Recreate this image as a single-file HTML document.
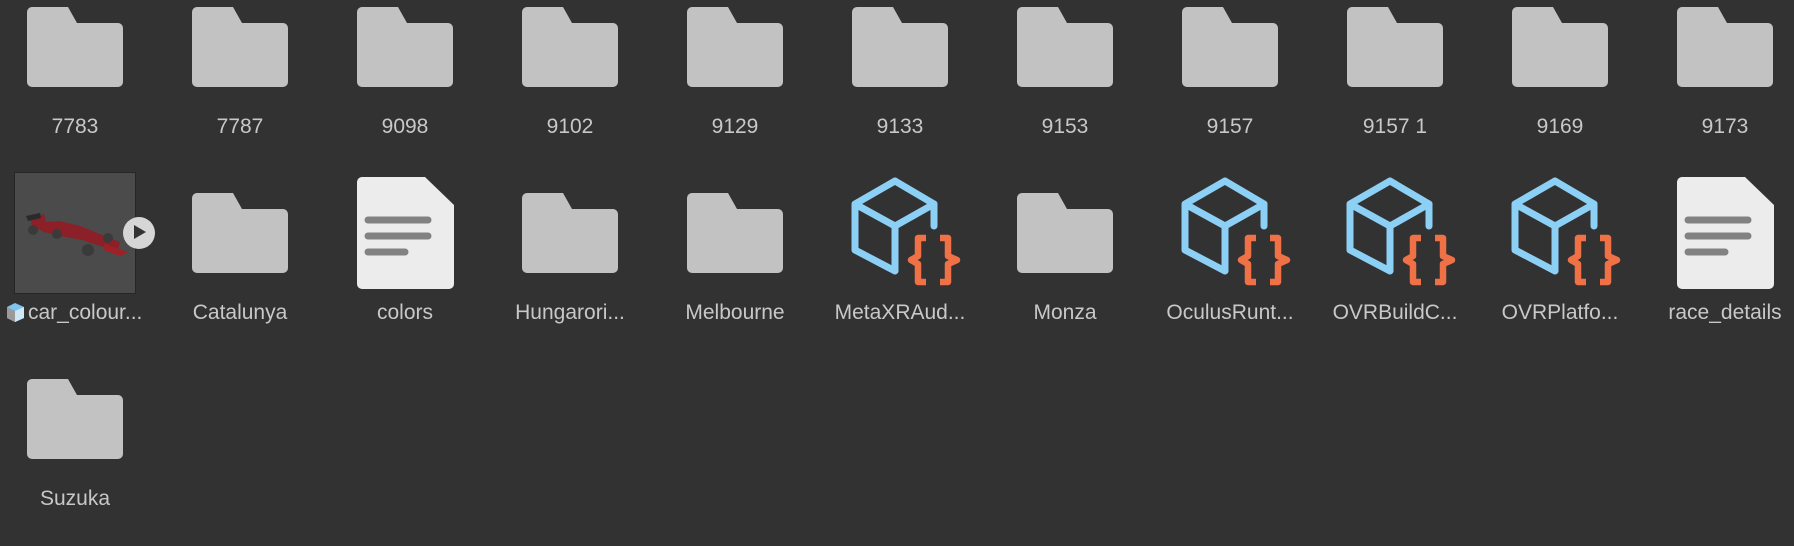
<!DOCTYPE html>
<html><head><meta charset="utf-8"><style>
html,body{margin:0;padding:0;background:#323232;width:1794px;height:546px;overflow:hidden;font-family:"Liberation Sans","DejaVu Sans",sans-serif}
svg{position:absolute;left:0;top:0}
.l{position:absolute;width:150px;text-align:center;color:#c8c8c8;font-size:21px;line-height:24px;white-space:nowrap}
</style></head><body>
<svg width="1794" height="546" viewBox="0 0 1794 546">
<defs>
<path id="fo" d="M27,12 a5,5 0 0 1 5-5 h36 l9,16 h41 a5,5 0 0 1 5,5 v54 a5,5 0 0 1 -5,5 h-86 a5,5 0 0 1 -5-5 z" fill="#c2c2c2"/>
<g id="doc">
<path d="M27,182 a5,5 0 0 1 5-5 h63 l29,28 v79 a5,5 0 0 1 -5,5 h-87 a5,5 0 0 1 -5-5 z" fill="#ececec"/>
<g stroke="#828282" stroke-width="7" stroke-linecap="round">
<line x1="38" y1="220" x2="98" y2="220"/><line x1="38" y1="236" x2="98" y2="236"/><line x1="38" y1="252" x2="75" y2="252"/>
</g></g>
<g id="cube">
<g fill="none" stroke="#8dd0f6" stroke-width="7" stroke-linejoin="round" stroke-linecap="round">
<path d="M70,181 L109,204 V226"/>
<path d="M70,181 L30,204 V250 L70,271 V226 L30,204"/>
<path d="M70,226 L109,204"/>
</g>
<g fill="none" stroke="#ef7145" stroke-width="6.5" stroke-linejoin="round">
<path d="M101,238 H93 V256 L86,260 L93,264 V282 H101"/>
<path d="M115,238 H123 V256 L132,260 L123,264 V282 H115"/>
</g></g>
</defs>
<use href="#fo" x="0"/><use href="#fo" x="165"/><use href="#fo" x="330"/><use href="#fo" x="495"/><use href="#fo" x="660"/><use href="#fo" x="825"/><use href="#fo" x="990"/><use href="#fo" x="1155"/><use href="#fo" x="1320"/><use href="#fo" x="1485"/><use href="#fo" x="1650"/>
<rect x="14" y="172" width="122" height="122" fill="#262626"/>
<rect x="15" y="173" width="120" height="120" fill="#4b4b4b"/>
<g>
<path d="M30,218 L44,214 L46,222 L60,221 L80,226 L105,236 L120,242 L118,250 L100,246 L82,240 L60,236 L44,232 L32,226 Z" fill="#8c2028"/>
<path d="M26,216 L40,213 L41,218 L28,221 Z" fill="#2a2a2a"/>
<circle cx="33" cy="230" r="5" fill="#3a3a3a"/><circle cx="57" cy="234" r="5" fill="#3a3a3a"/>
<circle cx="88" cy="250" r="6" fill="#3a3a3a"/><circle cx="108" cy="238" r="5" fill="#3a3a3a"/>
<path d="M104,244 L128,252 L120,256 L104,250 Z" fill="#a02028"/>
</g>
<circle cx="139" cy="233" r="16" fill="#d6d6d6"/>
<path d="M134,225 L146,232 L134,239 Z" fill="#333"/>
<use href="#fo" x="165" y="186"/>
<use href="#doc" x="330"/>
<use href="#fo" x="495" y="186"/>
<use href="#fo" x="660" y="186"/>
<use href="#cube" x="825"/>
<use href="#fo" x="990" y="186"/>
<use href="#cube" x="1155"/>
<use href="#cube" x="1320"/>
<use href="#cube" x="1485"/>
<use href="#doc" x="1650"/>
<use href="#fo" x="0" y="372"/>
<path d="M7,307 L15,303 L24,307 L24,318 L15,322 L7,318 Z" fill="#7fc4ec"/>
<path d="M15,311 L24,307 L24,318 L15,322 Z" fill="#cfe8f8"/>
<path d="M7,307 L15,311 L15,322 L7,318 Z" fill="#9a9a9a"/>
</svg>
<div class="l" style="left:0;top:115px">7783</div>
<div class="l" style="left:165px;top:115px">7787</div>
<div class="l" style="left:330px;top:115px">9098</div>
<div class="l" style="left:495px;top:115px">9102</div>
<div class="l" style="left:660px;top:115px">9129</div>
<div class="l" style="left:825px;top:115px">9133</div>
<div class="l" style="left:990px;top:115px">9153</div>
<div class="l" style="left:1155px;top:115px">9157</div>
<div class="l" style="left:1320px;top:115px">9157 1</div>
<div class="l" style="left:1485px;top:115px">9169</div>
<div class="l" style="left:1650px;top:115px">9173</div>
<div class="l" style="left:28px;top:301px;width:auto;text-align:left">car_colour...</div>
<div class="l" style="left:165px;top:301px">Catalunya</div>
<div class="l" style="left:330px;top:301px">colors</div>
<div class="l" style="left:495px;top:301px">Hungarori...</div>
<div class="l" style="left:660px;top:301px">Melbourne</div>
<div class="l" style="left:825px;top:301px">MetaXRAud...</div>
<div class="l" style="left:990px;top:301px">Monza</div>
<div class="l" style="left:1155px;top:301px">OculusRunt...</div>
<div class="l" style="left:1320px;top:301px">OVRBuildC...</div>
<div class="l" style="left:1485px;top:301px">OVRPlatfo...</div>
<div class="l" style="left:1650px;top:301px">race_details</div>
<div class="l" style="left:0;top:487px">Suzuka</div>
</body></html>
